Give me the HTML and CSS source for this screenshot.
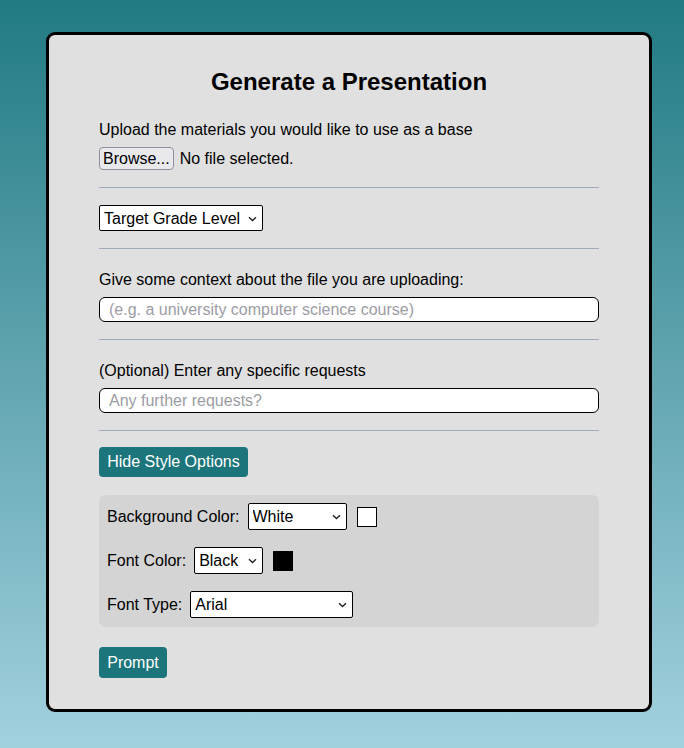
FILE: index.html
```html
<!DOCTYPE html>
<html lang="en">
<head>
<meta charset="utf-8">
<title>Generate a Presentation</title>
<link rel="stylesheet" href="styles.css">
</head>
<body>
<main class="card">
  <h1 class="title">Generate a Presentation</h1>

  <p class="label first">Upload the materials you would like to use as a base</p>
  <div class="file-row">
    <button class="browse" type="button">Browse...</button>
    <span class="file-status">No file selected.</span>
  </div>

  <hr class="rule">

  <div class="select-wrap grade">
    <select class="select">
      <option>Target Grade Level</option>
    </select>
    <svg class="chev" width="9" height="6" viewBox="0 0 9 6"><path d="M1 1.2 L4.5 4.6 L8 1.2" fill="none" stroke="#222" stroke-width="1.4"/></svg>
  </div>

  <hr class="rule">

  <p class="label">Give some context about the file you are uploading:</p>
  <input class="text-input" type="text" placeholder="(e.g. a university computer science course)">

  <hr class="rule">

  <p class="label">(Optional) Enter any specific requests</p>
  <input class="text-input" type="text" placeholder="Any further requests?">

  <hr class="rule">

  <button class="btn toggle" type="button">Hide Style Options</button>

  <section class="style-panel">
    <div class="style-row">
      <span class="row-label">Background Color:</span>
      <div class="select-wrap bg">
        <select class="select"><option>White</option></select>
        <svg class="chev" width="9" height="6" viewBox="0 0 9 6"><path d="M1 1.2 L4.5 4.6 L8 1.2" fill="none" stroke="#222" stroke-width="1.4"/></svg>
      </div>
      <span class="swatch white"></span>
    </div>
    <div class="style-row">
      <span class="row-label">Font Color:</span>
      <div class="select-wrap fc">
        <select class="select"><option>Black</option></select>
        <svg class="chev" width="9" height="6" viewBox="0 0 9 6"><path d="M1 1.2 L4.5 4.6 L8 1.2" fill="none" stroke="#222" stroke-width="1.4"/></svg>
      </div>
      <span class="swatch black"></span>
    </div>
    <div class="style-row">
      <span class="row-label">Font Type:</span>
      <div class="select-wrap ft">
        <select class="select"><option>Arial</option></select>
        <svg class="chev" width="9" height="6" viewBox="0 0 9 6"><path d="M1 1.2 L4.5 4.6 L8 1.2" fill="none" stroke="#222" stroke-width="1.4"/></svg>
      </div>
    </div>
  </section>

  <button class="btn prompt" type="button">Prompt</button>
</main>
</body>
</html>
```

FILE: styles.css
```css
* { box-sizing: border-box; }

html, body {
  margin: 0;
  padding: 0;
}

body {
  min-height: 748px;
  background: linear-gradient(to bottom, #217a83 0%, #a2d1de 100%);
  font-family: "Liberation Sans", Arial, sans-serif;
  font-size: 16px;
  color: #000;
  padding: 32px 0 36px 46px;
}

.card {
  width: 606px;
  height: 680px;
  background: #e0e0e0;
  border: 3px solid #000;
  border-radius: 9px;
  padding: 33px 50px 0 50px;
  display: flex;
  flex-direction: column;
  align-items: flex-start;
}

.title {
  align-self: stretch;
  margin: 0;
  text-align: center;
  font-size: 24px;
  font-weight: bold;
  line-height: 28px;
}

.label {
  margin: 22px 0 0 0;
  line-height: 18px;
}

.label.first {
  margin-top: 25px;
}

.file-row {
  margin-top: 8px;
  display: flex;
  align-items: center;
  gap: 6px;
}

.browse {
  font-family: inherit;
  font-size: 16px;
  color: #000;
  height: 23px;
  padding: 0 3px;
  background: #e9e9ed;
  border: 1px solid #8f8f9d;
  border-radius: 4px;
  line-height: 21px;
}

.rule {
  align-self: stretch;
  margin: 17px 0 0 0;
  border: 0;
  height: 1px;
  background: #a2abbd;
}

.select-wrap {
  position: relative;
  display: inline-block;
}

.select {
  appearance: none;
  -webkit-appearance: none;
  font-family: inherit;
  font-size: 16px;
  color: #000;
  background: #fff;
  border: 1px solid #000;
  border-radius: 2px;
  height: 26px;
  padding: 0 20px 0 4px;
  margin: 0;
  width: 100%;
}

.chev {
  position: absolute;
  right: 6px;
  top: 11px;
  pointer-events: none;
}

.select-wrap.grade {
  width: 164px;
  margin-top: 17px;
}

.text-input {
  align-self: stretch;
  margin-top: 8px;
  height: 25px;
  border: 1px solid #000;
  border-radius: 6px;
  background: #fff;
  padding: 0 9px;
  font-family: inherit;
  font-size: 16px;
  color: #000;
}

.text-input::placeholder {
  color: #9c9ca4;
}

.btn {
  font-family: inherit;
  font-size: 16px;
  color: #fff;
  background: #1b757b;
  border: 0;
  border-radius: 4px;
  padding: 0 8px;
  line-height: 18px;
}

.toggle {
  margin-top: 16px;
  height: 30px;
  width: 149px;
}

.style-panel {
  align-self: stretch;
  margin-top: 18px;
  background: #d4d4d4;
  border-radius: 7px;
  padding: 8px 8px 9px 8px;
  display: flex;
  flex-direction: column;
  gap: 17px;
}

.style-row {
  display: flex;
  align-items: center;
  height: 27px;
}

.row-label {
  margin-right: 8px;
}

.style-row .select {
  height: 27px;
}

.style-row .chev {
  top: 11px;
}

.select-wrap.bg { width: 99px; }
.select-wrap.fc { width: 69px; }
.select-wrap.ft { width: 163px; }

.swatch {
  width: 20px;
  height: 20px;
  margin-left: 10px;
  border: 1px solid #000;
}

.swatch.white { background: #fff; }
.swatch.black { background: #000; }

.prompt {
  margin-top: 20px;
  height: 31px;
  width: 68px;
}
```
